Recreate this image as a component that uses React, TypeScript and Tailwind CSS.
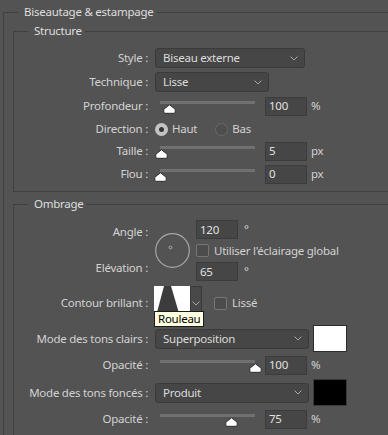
import type { ReactNode } from "react";

const line = "border-[#404040]";

function Group({ title, children, className = "", bodyClassName = "" }: { title: string; children: ReactNode; className?: string; bodyClassName?: string }) {
  return (
    <div className={`flex flex-col ${className}`}>
      <div className="flex h-4">
        <div className={`w-[15px] h-2 self-end border-l border-t ${line}`} />
        <span className="ml-[6px] mr-[3px] leading-4 text-[#dedede] whitespace-nowrap">{title}</span>
        <div className={`flex-1 h-2 self-end border-t ${line}`} />
      </div>
      <div className={`border-l ${line} ${bodyClassName}`}>{children}</div>
    </div>
  );
}

function Label({ children }: { children: ReactNode }) {
  return <div className="w-[134px] shrink-0 text-right whitespace-nowrap text-[#d2d2d2]">{children}</div>;
}

function Chevron() {
  return (
    <svg width="8" height="5" viewBox="0 0 8 5">
      <polyline points="0.5,0.5 4,4 7.5,0.5" fill="none" stroke="#a8a8a8" strokeWidth="1" />
    </svg>
  );
}

function Dropdown({ value, width }: { value: string; width: string }) {
  return (
    <div className={`${width} h-[20px] flex items-center justify-between pl-[7px] pr-[6px] rounded-[3px] border border-[#3a3a3a] bg-[#464646] text-[#dcdcdc]`}>
      <span>{value}</span>
      <Chevron />
    </div>
  );
}

function NumBox({ value }: { value: string }) {
  return (
    <div className="w-[42px] h-[19px] flex items-center pl-[3px] border border-[#3c3c3c] bg-[#464646] text-[#e0e0e0]">{value}</div>
  );
}

function Thumb() {
  return (
    <svg width="13" height="10" viewBox="0 0 13 10">
      <path d="M6.5 0.8 L12.2 5.2 V8.2 Q12.2 9.3 11 9.3 H2 Q0.8 9.3 0.8 8.2 V5.2 Z" fill="#ffffff" stroke="#2e2e2e" strokeWidth="1" />
    </svg>
  );
}

function Slider({ pct }: { pct: number }) {
  return (
    <div className="relative ml-[5px] w-[95px] h-[20px] shrink-0">
      <div className="absolute left-0 right-0 top-[5px] h-[3px] bg-[#707070]" />
      <div className="absolute top-[8px] leading-none" style={{ left: pct * 95 - 6.5 }}>
        <Thumb />
      </div>
    </div>
  );
}

function SliderRow({ label, pct, value, unit, h }: { label: string; pct: number; value: string; unit: string; h: string }) {
  return (
    <div className={`flex items-center ${h}`}>
      <Label>{label}</Label>
      <div className="ml-[7px] flex items-center">
        <Slider pct={pct} />
        <div className="ml-[10px]">
          <NumBox value={value} />
        </div>
        <span className="ml-[4px] text-[#d2d2d2]">{unit}</span>
      </div>
    </div>
  );
}

function Checkbox() {
  return <div className="w-[13px] h-[13px] rounded-[2px] border border-[#767676] bg-[#4c4c4c]" />;
}

function Radio({ checked }: { checked?: boolean }) {
  return checked ? (
    <div className="w-[13px] h-[13px] rounded-full bg-[#c4c4c4] flex items-center justify-center">
      <div className="w-[5px] h-[5px] rounded-full bg-[#353535]" />
    </div>
  ) : (
    <div className="w-[13px] h-[13px] rounded-full border border-[#6a6a6a] bg-[#4e4e4e]" />
  );
}

function Dial() {
  return (
    <svg width="35" height="35" viewBox="0 0 35 35">
      <circle cx="17.5" cy="17.5" r="16.8" fill="none" stroke="#a6a6a6" strokeWidth="1.2" />
      <circle cx="15.5" cy="14.5" r="1.4" fill="none" stroke="#b0b0b0" strokeWidth="0.9" />
    </svg>
  );
}

function Contour() {
  return (
    <svg width="36" height="34" viewBox="0 0 36 34">
      <rect width="36" height="34" fill="#ffffff" />
      <polygon points="10,0 17,0 27,34 1,34" fill="#3c3c3c" />
    </svg>
  );
}

export default function App() {
  return (
    <div className="h-screen overflow-hidden bg-[#535353] text-[11.5px] tracking-[-0.25px] font-['Segoe_UI','Noto_Sans',sans-serif] flex flex-col pl-[3px] pt-[4px]">
      <Group title="Biseautage & estampage" className="flex-1" bodyClassName="flex-1 flex flex-col">
        {/* Structure */}
        <Group title="Structure" className="ml-[9px] mt-[3px]" bodyClassName={`border-b ${line} pt-[7px] pb-[5px]`}>
          <div className="flex items-center h-[24px]">
            <Label>Style :</Label>
            <div className="ml-[7px]">
              <Dropdown value="Biseau externe" width="w-[150px]" />
            </div>
          </div>
          <div className="flex items-center h-[24px]">
            <Label>Technique :</Label>
            <div className="ml-[7px]">
              <Dropdown value="Lisse" width="w-[114px]" />
            </div>
          </div>
          <SliderRow label="Profondeur :" pct={0.1} value="100" unit="%" h="h-[24px]" />
          <div className="flex items-center h-[22px]">
            <Label>Direction :</Label>
            <div className="ml-[7px] flex items-center text-[#d2d2d2]">
              <Radio checked />
              <span className="ml-[4px]">Haut</span>
              <div className="ml-[18px]">
                <Radio />
              </div>
              <span className="ml-[4px]">Bas</span>
            </div>
          </div>
          <SliderRow label="Taille :" pct={0.02} value="5" unit="px" h="h-[22px]" />
          <SliderRow label="Flou :" pct={0} value="0" unit="px" h="h-[24px]" />
        </Group>

        {/* Ombrage */}
        <Group title="Ombrage" className="ml-[9px] mt-[4px] flex-1" bodyClassName="flex-1">
          <div className="mt-[7px] flex">
            <div className="w-[134px] shrink-0 flex flex-col pt-[5px] gap-[20px] text-right text-[#d2d2d2] leading-4">
              <span>Angle :</span>
              <span>Elévation :</span>
            </div>
            <div className="ml-[7px] self-center leading-none">
              <Dial />
            </div>
            <div className="ml-[6px] flex flex-col text-[#d2d2d2]">
              <div className="h-[21px] flex items-center">
                <NumBox value="120" />
                <span className="ml-[6px] self-start mt-[1px]">°</span>
              </div>
              <div className="h-[21px] flex items-center">
                <Checkbox />
                <span className="ml-[5px]">Utiliser l'éclairage global</span>
              </div>
              <div className="h-[21px] flex items-center">
                <NumBox value="65" />
                <span className="ml-[6px] self-start mt-[1px]">°</span>
              </div>
            </div>
          </div>

          <div className="mt-[4px] flex items-center h-[34px]">
            <Label>Contour brillant :</Label>
            <div className="ml-[6px] relative flex">
              <div className="leading-none">
                <Contour />
              </div>
              <div className="w-[12px] h-[34px] flex items-center justify-center border border-[#3a3a3a] bg-[#494949]">
                <Chevron />
              </div>
              <div className="absolute left-0 top-[25px] z-10 h-[16px] px-[3px] flex items-center border border-[#1a1a1a] bg-[#ffffe1] text-[#000000] whitespace-nowrap">
                Rouleau
              </div>
            </div>
            <div className="ml-[12px]">
              <Checkbox />
            </div>
            <span className="ml-[5px] text-[#d2d2d2]">Lissé</span>
          </div>

          <div className="mt-[5px] flex items-center h-[27px]">
            <Label>Mode des tons clairs :</Label>
            <div className="ml-[7px]">
              <Dropdown value="Superposition" width="w-[154px]" />
            </div>
            <div className="ml-[4px] w-[34px] h-[27px] border border-[#2c2c2c] bg-[#ffffff]" />
          </div>
          <div className="mt-[3px]">
            <SliderRow label="Opacité :" pct={1} value="100" unit="%" h="h-[20px]" />
          </div>
          <div className="mt-[4px] flex items-center h-[27px]">
            <Label>Mode des tons foncés :</Label>
            <div className="ml-[7px]">
              <Dropdown value="Produit" width="w-[154px]" />
            </div>
            <div className="ml-[4px] w-[34px] h-[27px] border border-[#3a3a3a] bg-[#000000]" />
          </div>
          <div className="mt-[3px]">
            <SliderRow label="Opacité :" pct={0.75} value="75" unit="%" h="h-[20px]" />
          </div>
        </Group>
      </Group>
    </div>
  );
}
